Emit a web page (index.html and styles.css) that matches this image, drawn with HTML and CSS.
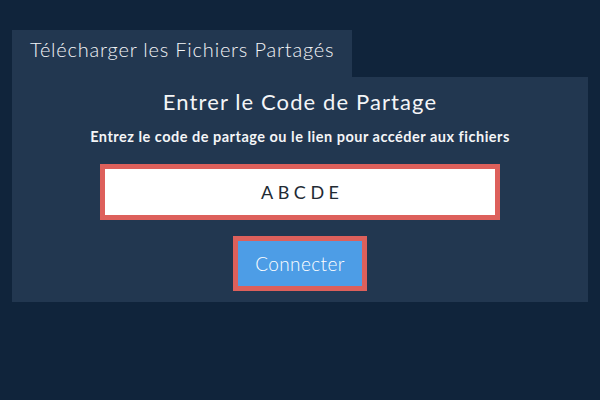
FILE: index.html
```html
<!DOCTYPE html>
<html lang="fr">
<head>
<meta charset="utf-8">
<link rel="stylesheet" href="styles.css">
</head>
<body>
<div class="page">
  <div class="tab">Télécharger les Fichiers Partagés</div>
  <div class="panel">
    <h2 class="title">Entrer le Code de Partage</h2>
    <p class="subtitle">Entrez le code de partage ou le lien pour accéder aux fichiers</p>
    <div class="code-input">ABCDE</div>
    <button class="connect">Connecter</button>
  </div>
</div>
</body>
</html>
```
FILE: styles.css
```css
html, body {
  margin: 0;
  padding: 0;
  background: #10243b;
  font-family: Lato, "Noto Sans", sans-serif;
  color: #f0f2f5;
}
.page {
  padding: 30px 12px;
}
.tab {
  display: inline-block;
  background: #223750;
  height: 47px;
  line-height: 38px;
  padding: 0 18px;
  font-size: 20px;
  font-weight: 300;
  letter-spacing: 0.8px;
  color: #f2f4f7;
}
.panel {
  background: #223750;
  height: 225px;
  display: flex;
  flex-direction: column;
  align-items: center;
  box-sizing: border-box;
  padding-top: 12px;
}
.title {
  margin: 0;
  font-size: 22px;
  font-weight: 400;
  line-height: 26px;
  letter-spacing: 1.1px;
  color: #f4f5f7;
}
.subtitle {
  margin: 13px 0 0;
  font-size: 14.5px;
  font-weight: 700;
  line-height: 18px;
  letter-spacing: 0.5px;
  color: #f4f5f7;
}
.code-input {
  margin-top: 18px;
  width: 390px;
  height: 46px;
  background: #ffffff;
  border: 5px solid #dd605b;
  display: flex;
  align-items: center;
  justify-content: center;
  font-size: 18px;
  letter-spacing: 4.5px;
  text-indent: 4.5px;
  color: #222a33;
}
.connect {
  margin-top: 16px;
  width: 134px;
  height: 55px;
  background: #4d9de6;
  border: 5px solid #dd605b;
  color: #ffffff;
  font-family: Lato, "Noto Sans", sans-serif;
  font-size: 19px;
  font-weight: 300;
  letter-spacing: 0.4px;
  padding: 0;
}
```
